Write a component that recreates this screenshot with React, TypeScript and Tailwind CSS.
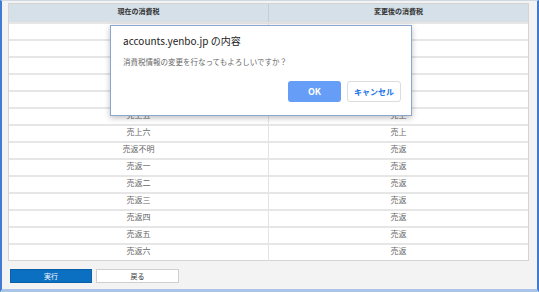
import React from "react";

const rows: [string, string][] = [
  ["売上不明", "売上"],
  ["売上一", "売上"],
  ["売上二", "売上"],
  ["売上三", "売上"],
  ["売上四", "売上"],
  ["売上五", "売上"],
  ["売上六", "売上"],
  ["売返不明", "売返"],
  ["売返一", "売返"],
  ["売返二", "売返"],
  ["売返三", "売返"],
  ["売返四", "売返"],
  ["売返五", "売返"],
  ["売返六", "売返"],
];

const font = { fontFamily: '"Noto Sans CJK JP", "Noto Sans", sans-serif' };

export default function App() {
  return (
    <div
      className="relative w-[539px] h-[292px] overflow-hidden bg-[#f3f3f3] border-l-2 border-r-2 border-[#3f7bd3] border-b-[3px] border-b-[#a9c4e8] border-t border-t-[#cfd8e3]"
      style={font}
    >
      <div className="pl-[6px] pt-[2px] pr-[6px]">
        {/* tax table */}
        <div className="w-[521px] border border-[#d4d4d4] bg-white">
          <div className="grid grid-cols-[260px_1fr] h-[18px] bg-[#d5e0e9] text-[7px] font-bold text-[#333]">
            <div className="flex items-center justify-center pb-[3px] border-r border-[#c4cfd9]">現在の消費税</div>
            <div className="flex items-center justify-center pb-[3px]">変更後の消費税</div>
          </div>
          {rows.map(([cur, next], i) => (
            <div
              key={i}
              className="grid grid-cols-[260px_1fr] h-[17px] border-t-2 border-[#e6e6e6] first:border-t-0 first:h-[16px] text-[8px] text-[#666]"
            >
              <div className="flex items-center justify-center pb-[4px] border-r border-[#e3e3e3]">{cur}</div>
              <div className="flex items-center justify-center pb-[4px]">{next}</div>
            </div>
          ))}
        </div>

        <div className="flex gap-[4px] mt-[8px] pl-[2px]">
          <button className="w-[82px] h-[14px] bg-[#0b6fc2] border border-[#0a5fa6] text-white text-[7px] flex items-center justify-center">
            実行
          </button>
          <button className="w-[83px] h-[14px] bg-white border border-[#cfcfcf] text-[#333] text-[7px] flex items-center justify-center">
            戻る
          </button>
        </div>
      </div>

      {/* confirm dialog */}
      <div className="absolute left-[108px] top-[24px] w-[302px] h-[91px] bg-white border border-[#8aa6cf] shadow-[0_2px_6px_rgba(0,0,0,0.25)]">
        <div className="pl-[12px] pt-[8px] text-[10px] text-[#222] leading-[13px]">accounts.yenbo.jp の内容</div>
        <div className="pl-[12px] pt-[9px] text-[7.5px] text-[#666] leading-[11px]">消費税情報の変更を行なってもよろしいですか？</div>
        <div className="flex justify-end gap-[6px] pr-[10px] mt-[14px]">
          <button className="w-[53px] h-[21px] rounded-[3px] bg-[#669df6] text-white text-[9px] font-bold flex items-center justify-center">
            OK
          </button>
          <button className="w-[54px] h-[21px] rounded-[3px] bg-white border border-[#dadce0] text-[#1a73e8] text-[8px] font-bold flex items-center justify-center">
            キャンセル
          </button>
        </div>
      </div>
    </div>
  );
}
